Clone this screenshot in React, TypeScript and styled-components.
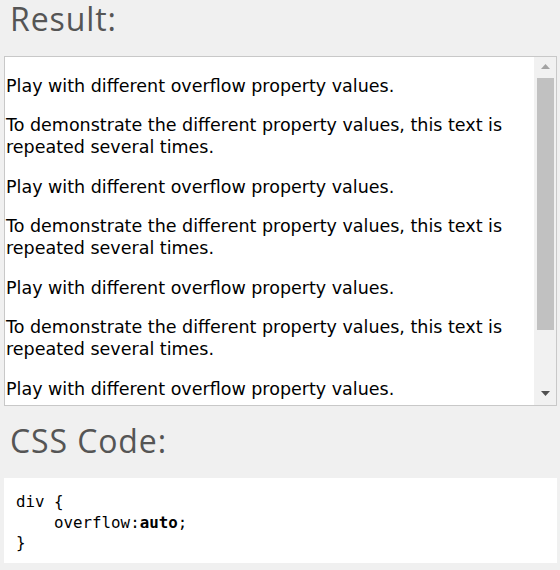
import React from 'react'
import styled, { createGlobalStyle } from 'styled-components'

const GlobalStyle = createGlobalStyle`
    html, body {
        margin: 0;
        padding: 0;
        background: #f0f0f0;
    }
    body {
        width: 560px;
        height: 570px;
        overflow: hidden;
    }
`

const Page = styled.div`
    display: flex;
    flex-direction: column;
    padding: 0 3px 0 4px;
`

const Heading = styled.h2<{ gapTop: number; gapBottom: number }>`
    margin: ${(p) => p.gapTop}px 0 ${(p) => p.gapBottom}px;
    padding: 0 0 0 6px;
    font-family: 'Open Sans', 'Noto Sans', sans-serif;
    font-weight: 400;
    font-size: 32px;
    letter-spacing: 0.9px;
    line-height: 38px;
    color: #555;
`

const ScrollBox = styled.div`
    box-sizing: border-box;
    height: 350px;
    display: flex;
    background: #fff;
    border: 1px solid #c8c8c8;
`

const Content = styled.div`
    flex: 1;
    overflow: hidden;
    padding: 0 0 0 1px;
    font-family: 'DejaVu Sans', Verdana, sans-serif;
    font-size: 17.5px;
    line-height: 22px;
    color: #000;
`

const Para = styled.p`
    margin: 17.5px 0;
`

const Scrollbar = styled.div`
    width: 22px;
    display: flex;
    flex-direction: column;
    background: #f1f1f1;
`

const ArrowButton = styled.div<{ nudge: number }>`
    height: 21px;
    display: flex;
    align-items: center;
    justify-content: center;
    padding-left: 1px;

    svg {
        transform: translateY(${(p) => p.nudge}px);
    }
`

const Track = styled.div`
    flex: 1;
    padding: 0 2px 0 3px;
`

const Thumb = styled.div`
    height: 252px;
    background: #c1c1c1;
`

const CodeBox = styled.pre`
    margin: 0;
    background: #fff;
    padding: 14px 12px 9px;
    font-family: 'DejaVu Sans Mono', 'Liberation Mono', monospace;
    font-size: 15.8px;
    line-height: 20.5px;
    color: #000;
`

const Strong = styled.b`
    font-weight: 700;
`

const Arrow: React.FC<{ up?: boolean; color: string }> = ({ up, color }) => (
    <svg width="9" height="5" viewBox="0 0 9 5">
        <polygon points={up ? '0,5 4.5,0 9,5' : '0,0 9,0 4.5,5'} fill={color} />
    </svg>
)

const lines = [
    'Play with different overflow property values.',
    'To demonstrate the different property values, this text is repeated several times.',
]

export default function App() {
    const paras = [0, 1, 2, 3].flatMap((i) => lines.map((t, j) => <Para key={`${i}-${j}`}>{t}</Para>))
    return (
        <>
            <GlobalStyle />
            <Page>
                <Heading gapTop={0} gapBottom={18}>Result:</Heading>
                <ScrollBox>
                    <Content>{paras}</Content>
                    <Scrollbar>
                        <ArrowButton nudge={-1}>
                            <Arrow up color="#a3a3a3" />
                        </ArrowButton>
                        <Track>
                            <Thumb />
                        </Track>
                        <ArrowButton nudge={-1}>
                            <Arrow color="#505050" />
                        </ArrowButton>
                    </Scrollbar>
                </ScrollBox>
                <Heading gapTop={16} gapBottom={18}>CSS Code:</Heading>
                <CodeBox>
                    {'div {\n    overflow:'}
                    <Strong>auto</Strong>
                    {';\n}'}
                </CodeBox>
            </Page>
        </>
    )
}
